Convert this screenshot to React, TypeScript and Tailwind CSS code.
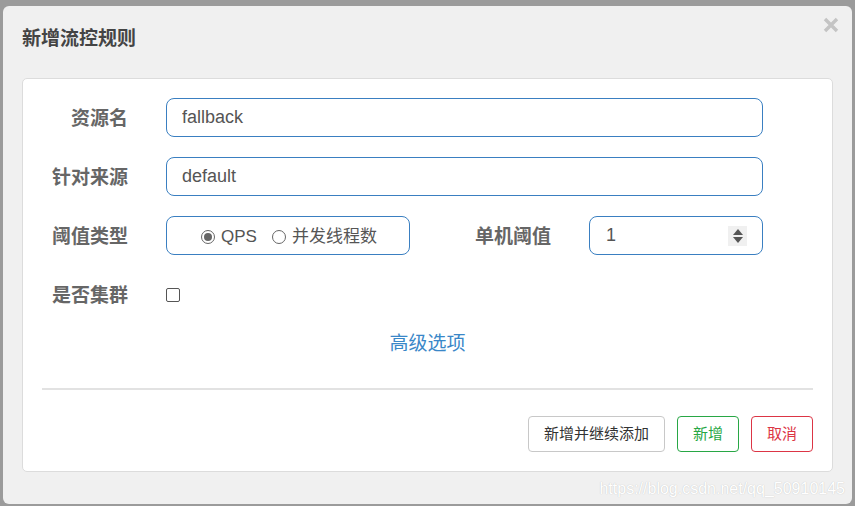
import { useState } from 'react';

const font = { fontFamily: '"Liberation Sans", "Noto Sans CJK SC", sans-serif' };

function Label({ children, className = '' }: { children: React.ReactNode; className?: string }) {
  return (
    <div className={`pt-[3px] text-right text-[19px] font-bold leading-[24px] text-[#666] ${className}`}>{children}</div>
  );
}

function Radio({ checked }: { checked: boolean }) {
  return (
    <span className="flex h-[14px] w-[14px] items-center justify-center rounded-full border border-[#666] bg-white">
      {checked && <span className="h-[8px] w-[8px] rounded-full bg-[#666]" />}
    </span>
  );
}

export default function App() {
  const [resource, setResource] = useState('fallback');
  const [origin, setOrigin] = useState('default');
  const [grade, setGrade] = useState(1);
  const [count, setCount] = useState('1');
  const [cluster, setCluster] = useState(false);

  return (
    <div className="relative h-[506px] w-[855px] overflow-hidden bg-[#9b9b9b] pl-[3px] pt-[6px]" style={font}>
      <div className="relative flex h-[498px] w-[849px] flex-col rounded-[6px] bg-[#f0f0f0] px-[19px]">
        {/* header */}
        <div className="flex items-start justify-between pt-[21px]">
          <h4 className="text-[19px] font-bold leading-[24px] text-[#444]">新增流控规则</h4>
          <button className="mr-[-6px] mt-[-10px]">
            <svg width="16" height="16" viewBox="0 0 16 16">
              <path d="M2 2 L14 14 M14 2 L2 14" stroke="#c4c4c4" strokeWidth="3.4" strokeLinecap="butt" />
            </svg>
          </button>
        </div>

        {/* body */}
        <div className="mt-[27px] flex h-[394px] w-[811px] flex-col rounded-[5px] border border-[#dcdcdc] bg-white px-[19px] pt-[19px]">
          <div className="flex flex-col gap-[20px]">
            <div className="flex items-center">
              <Label className="w-[86px]">资源名</Label>
              <input
                value={resource}
                onChange={(e) => setResource(e.target.value)}
                className="ml-[38px] h-[39px] w-[597px] rounded-[8px] border border-[#3a7fc1] px-[15px] text-[18px] text-[#555] outline-none"
              />
            </div>
            <div className="flex items-center">
              <Label className="w-[86px]">针对来源</Label>
              <input
                value={origin}
                onChange={(e) => setOrigin(e.target.value)}
                className="ml-[38px] h-[39px] w-[597px] rounded-[8px] border border-[#3a7fc1] px-[15px] text-[18px] text-[#555] outline-none"
              />
            </div>
            <div className="flex items-center">
              <Label className="w-[86px]">阈值类型</Label>
              <div className="ml-[38px] flex h-[39px] w-[244px] items-center justify-center gap-[6px] rounded-[8px] border border-[#3a7fc1] pl-[2px] pt-[3px] text-[17px] text-[#555]">
                <label className="flex cursor-pointer items-center gap-[6px]" onClick={() => setGrade(1)}>
                  <Radio checked={grade === 1} />
                  <span>QPS</span>
                </label>
                <label className="ml-[9px] flex cursor-pointer items-center gap-[6px]" onClick={() => setGrade(0)}>
                  <Radio checked={grade === 0} />
                  <span>并发线程数</span>
                </label>
              </div>
              <Label className="w-[141px]">单机阈值</Label>
              <div className="ml-[38px] flex h-[39px] w-[174px] items-center rounded-[8px] border border-[#3a7fc1] pl-[16px] pr-[15px]">
                <input
                  value={count}
                  onChange={(e) => setCount(e.target.value)}
                  className="w-full text-[18px] text-[#555] outline-none"
                />
                <div className="flex h-[20px] w-[19px] shrink-0 flex-col items-center justify-center gap-[2px] bg-[#f0f0f0]">
                  <svg width="10" height="6" viewBox="0 0 10 6"><path d="M5 0 L10 6 L0 6 Z" fill="#555" /></svg>
                  <svg width="10" height="6" viewBox="0 0 10 6"><path d="M0 0 L10 0 L5 6 Z" fill="#555" /></svg>
                </div>
              </div>
            </div>
            <div className="flex h-[39px] items-center">
              <Label className="w-[86px]">是否集群</Label>
              <button
                onClick={() => setCluster(!cluster)}
                className="ml-[38px] h-[14px] w-[14px] rounded-[2px] border border-[#555] bg-white"
              />
            </div>
          </div>

          <div className="mt-[18px] text-center">
            <a className="cursor-pointer text-[19px] leading-[24px] text-[#3a87c8]">高级选项</a>
          </div>

          <div className="mt-[31px] h-[2px] w-full bg-[#e2e2e2]" />

          <div className="mt-[26px] flex justify-end gap-[12px]">
            <button className="h-[36px] rounded-[4px] border border-[#c8c8c8] bg-white px-[15px] text-[15px] text-[#333]">
              新增并继续添加
            </button>
            <button className="h-[36px] rounded-[4px] border border-[#28a745] bg-white px-[15px] text-[15px] text-[#28a745]">
              新增
            </button>
            <button className="h-[36px] rounded-[4px] border border-[#dc3545] bg-white px-[15px] text-[15px] text-[#dc3545]">
              取消
            </button>
          </div>
        </div>

        {/* watermark */}
        <div className="pointer-events-none absolute bottom-[5px] right-[7px] text-[16px] leading-[20px] text-white [text-shadow:0_0_1px_#b8b8b8]">
          https://blog.csdn.net/qq_50910145
        </div>
      </div>
    </div>
  );
}
